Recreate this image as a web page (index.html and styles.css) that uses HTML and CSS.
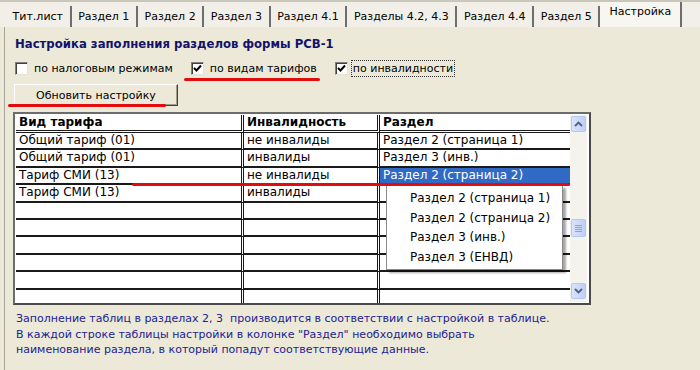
FILE: index.html
```html
<!DOCTYPE html>
<html lang="ru">
<head>
    <meta charset="UTF-8">
    <title>Настройка</title>
    <link rel="stylesheet" href="styles.css">
</head>
<body>
<div class="screen">
    <div class="tabs">
        <div class="tab">Тит.лист</div>
        <div class="tab">Раздел 1</div>
        <div class="tab">Раздел 2</div>
        <div class="tab">Раздел 3</div>
        <div class="tab">Раздел 4.1</div>
        <div class="tab">Разделы 4.2, 4.3</div>
        <div class="tab">Раздел 4.4</div>
        <div class="tab">Раздел 5</div>
        <div class="tab active">Настройка</div>
    </div>

    <div class="panel">
        <h2 class="title">Настройка заполнения разделов формы РСВ-1</h2>

        <div class="options">
            <label class="opt">
                <span class="box"></span>
                <span class="opt-text">по налоговым режимам</span>
            </label>
            <label class="opt">
                <span class="box"><svg viewBox="0 0 11 11" width="11" height="11"><path d="M2 5 L4.5 7.5 L9 2.5" fill="none" stroke="#000" stroke-width="2"/></svg></span>
                <span class="opt-text">по видам тарифов</span>
            </label>
            <label class="opt">
                <span class="box"><svg viewBox="0 0 11 11" width="11" height="11"><path d="M2 5 L4.5 7.5 L9 2.5" fill="none" stroke="#000" stroke-width="2"/></svg></span>
                <span class="opt-text focus">по инвалидности</span>
            </label>
        </div>

        <button class="btn">Обновить настройку</button>

        <div class="grid-wrap">
            <div class="grid">
                <div class="cell head">Вид тарифа</div>
                <div class="cell head">Инвалидность</div>
                <div class="cell head">Раздел</div>

                <div class="cell">Общий тариф (01)</div>
                <div class="cell">не инвалиды</div>
                <div class="cell">Раздел 2 (страница 1)</div>

                <div class="cell">Общий тариф (01)</div>
                <div class="cell">инвалиды</div>
                <div class="cell">Раздел 3 (инв.)</div>

                <div class="cell">Тариф СМИ (13)</div>
                <div class="cell">не инвалиды</div>
                <div class="cell selected">Раздел 2 (страница 2)</div>

                <div class="cell">Тариф СМИ (13)</div>
                <div class="cell">инвалиды</div>
                <div class="cell"></div>

                <div class="cell"></div><div class="cell"></div><div class="cell"></div>
                <div class="cell"></div><div class="cell"></div><div class="cell"></div>
                <div class="cell"></div><div class="cell"></div><div class="cell"></div>
                <div class="cell"></div><div class="cell"></div><div class="cell"></div>
                <div class="cell"></div><div class="cell"></div><div class="cell"></div>
                <div class="cell"></div><div class="cell"></div><div class="cell"></div>
            </div>

            <div class="scrollbar">
                <div class="sb-btn"><svg viewBox="0 0 9 6" width="9" height="6"><path d="M1 5 L4.5 1.5 L8 5" fill="none" stroke="#4d6185" stroke-width="1.8"/></svg></div>
                <div class="sb-track">
                    <div class="sb-thumb"><span></span><span></span><span></span><span></span></div>
                </div>
                <div class="sb-btn"><svg viewBox="0 0 9 6" width="9" height="6"><path d="M1 1 L4.5 4.5 L8 1" fill="none" stroke="#4d6185" stroke-width="1.8"/></svg></div>
            </div>

            <ul class="dropdown">
                <li>Раздел 2 (страница 1)</li>
                <li>Раздел 2 (страница 2)</li>
                <li>Раздел 3 (инв.)</li>
                <li>Раздел 3 (ЕНВД)</li>
            </ul>
        </div>

        <p class="note">
            Заполнение таблиц в разделах 2, 3&nbsp; производится в соответствии с настройкой в таблице.<br>
            В каждой строке таблицы настройки в колонке "Раздел" необходимо выбрать<br>
            наименование раздела, в который попадут соответствующие данные.
        </p>
    </div>

    <!-- красные пометки поверх скриншота -->
    <div class="mark mark-opt"></div>
    <div class="mark mark-btn"></div>
    <div class="mark mark-row"></div>
</div>
</body>
</html>
```

FILE: styles.css
```css
body {
    margin: 0;
    background-color: #ece9d8;
    font-family: "DejaVu Sans", sans-serif;
    font-size: 11px;
    color: #000;
}

.screen {
    position: relative;
    width: 700px;
    height: 370px;
    overflow: hidden;
}

.tabs {
    display: flex;
    align-items: flex-end;
    height: 27px;
    padding-left: 6px;
    background-color: #f1efe7;
    border-top: 2px solid #c9c6ba;
    box-sizing: border-box;
}

.tab {
    height: 21px;
    line-height: 21px;
    padding: 0 6.6px;
    border-right: 2px solid #6e6e6e;
    white-space: nowrap;
}

.tab.active {
    height: 25px;
    line-height: 19px;
    padding: 0 9px;
    background-color: #f7f6f0;
}

.panel {
    margin-left: 4px;
    padding: 9px 0 0 9px;
    border-left: 1px solid #a7a49a;
    height: 343px;
    box-sizing: border-box;
}

.title {
    margin: 0 0 0 1px;
    font-size: 11.7px;
    line-height: 16px;
    color: #12126a;
}

.options {
    display: flex;
    align-items: center;
    margin-top: 9px;
    height: 15px;
}

.opt {
    display: flex;
    align-items: center;
    margin-right: 17px;
}

.box {
    display: flex;
    align-items: center;
    justify-content: center;
    width: 11px;
    height: 11px;
    margin-left: 1px;
    background-color: #fff;
    border: 1px solid;
    border-color: #808080 #e4e2d8 #e4e2d8 #808080;
    box-shadow: inset 1px 1px 0 #404040;
}

.opt-text {
    margin-left: 6px;
    white-space: nowrap;
}

.opt-text.focus {
    margin-left: 3px;
    padding: 1px 1px;
    border: 1px dotted #333;
}

.btn {
    display: block;
    margin-top: 8px;
    width: 164px;
    height: 22px;
    font-family: "DejaVu Sans", sans-serif;
    font-size: 11px;
    background-color: #ece9d8;
    border: 1px solid;
    border-color: #fff #404040 #404040 #fff;
    box-shadow: inset -1px -1px 0 #a09d92;
    padding: 0;
}

.grid-wrap {
    position: relative;
    display: flex;
    margin: 6px 0 0 -1px;
    width: 578px;
    height: 193px;
    padding: 1px;
    box-sizing: border-box;
    background-color: #fff;
    border: 2px solid;
    border-color: #6c6c6c #4a4a4a #4a4a4a #6c6c6c;
    overflow: hidden;
}

.grid {
    display: grid;
    grid-template-columns: 228px 136px 190px;
    grid-template-rows: 18px;
    grid-auto-rows: 17.4px;
    width: 554px;
    font-size: 12px;
}

.cell {
    border-bottom: 2px solid #1a1a1a;
    padding-left: 3px;
    line-height: 15px;
    white-space: nowrap;
    overflow: hidden;
    box-sizing: border-box;
}

.cell:nth-child(3n+1),
.cell:nth-child(3n+2) {
    border-right: 3px double #1a1a1a;
}

.cell.head {
    font-weight: bold;
    border-bottom: 3px double #1a1a1a;
    line-height: 14px;
}

.cell.selected {
    background-color: #316ac5;
    color: #fff;
}

.scrollbar {
    display: flex;
    flex-direction: column;
    width: 17px;
    padding: 1px 1px 3px 1px;
    box-sizing: border-box;
    background-color: #f4f3ee;
}

.sb-btn,
.sb-thumb {
    display: flex;
    flex-direction: column;
    align-items: center;
    justify-content: center;
    height: 16px;
    background: linear-gradient(to right, #d9e4fb, #bfd0f6);
    border: 1px solid #b4c7f0;
    border-radius: 2px;
    box-sizing: border-box;
}

.sb-track {
    flex: 1;
}

.sb-thumb {
    margin-top: 87px;
    height: 18px;
    gap: 1px;
}

.sb-thumb span {
    width: 7px;
    height: 1px;
    background-color: #8aa4dc;
}

.dropdown {
    position: absolute;
    left: 371px;
    top: 71px;
    width: 177px;
    height: 85px;
    margin: 0;
    padding: 3px 0 0 23px;
    box-sizing: border-box;
    list-style: none;
    background-color: #fff;
    border: 1px solid #8a8a8a;
    box-shadow: 3px 3px 2px rgba(0, 0, 0, 0.35);
    font-size: 12px;
}

.dropdown li {
    height: 19.5px;
    line-height: 19.5px;
    white-space: nowrap;
}

.note {
    margin: 6px 0 0 2px;
    line-height: 15.5px;
    color: #22228f;
}

.mark {
    position: absolute;
    height: 3px;
    background-color: #e10d0d;
    border-radius: 2px;
}

.mark-opt {
    left: 184px;
    top: 78px;
    width: 136px;
}

.mark-btn {
    left: 8px;
    top: 104px;
    width: 158px;
}

.mark-row {
    left: 132px;
    top: 183px;
    width: 438px;
}
```
